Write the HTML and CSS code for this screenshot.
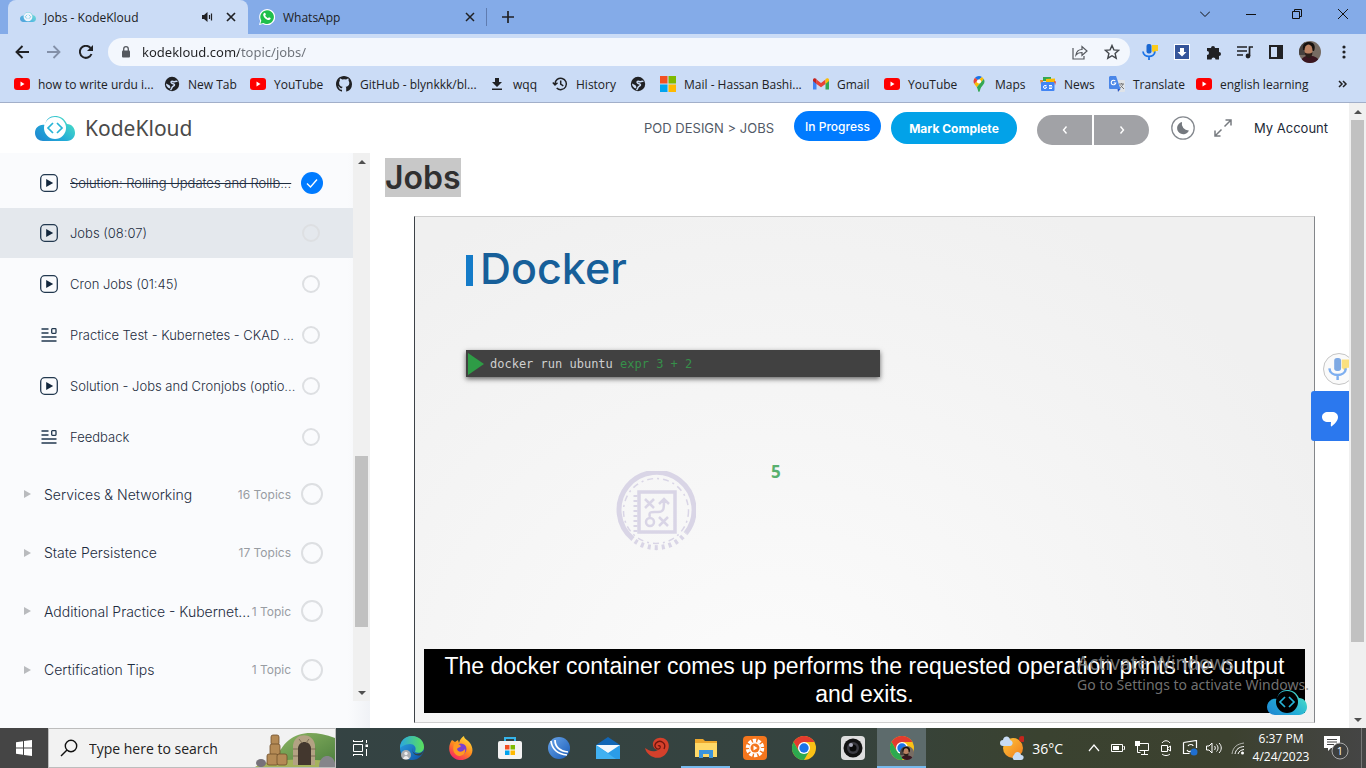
FILE: index.html
```html
<!DOCTYPE html>
<html lang="en">
<head>
<meta charset="utf-8">
<title>Jobs - KodeKloud</title>
<link rel="stylesheet" href="styles.css">
</head>
<body>
<svg class="defs" aria-hidden="true">
  <defs>
    <linearGradient id="g-cloud" x1="0" y1="1" x2="1" y2="0.3"><stop offset="0" stop-color="#1f83cf"/><stop offset=".5" stop-color="#22abd8"/><stop offset="1" stop-color="#48dcc6"/></linearGradient>
    <linearGradient id="g-edge" x1="0" y1="0" x2="1" y2="1"><stop offset="0" stop-color="#2fa8e8"/><stop offset="1" stop-color="#0c4fa3"/></linearGradient>
    <linearGradient id="g-edge2" x1="0" y1="0" x2="1" y2="0"><stop offset="0" stop-color="#2aa7e0"/><stop offset="1" stop-color="#5be05a"/></linearGradient>
    <linearGradient id="g-fox" x1=".8" y1="0" x2=".2" y2="1"><stop offset="0" stop-color="#ffe23e"/><stop offset=".5" stop-color="#ff8a1e"/><stop offset="1" stop-color="#f5186c"/></linearGradient>
    <linearGradient id="g-sun" x1="0" y1="0" x2="1" y2="1"><stop offset="0" stop-color="#ffc53a"/><stop offset="1" stop-color="#f07c1c"/></linearGradient>
    <linearGradient id="g-ball" x1="0" y1="0" x2="1" y2="1"><stop offset="0" stop-color="#6aa6ea"/><stop offset="1" stop-color="#1a5cb8"/></linearGradient>
    <linearGradient id="g-hill" x1="0" y1="0" x2="1" y2="1"><stop offset="0" stop-color="#8fb864"/><stop offset="1" stop-color="#4b7d3d"/></linearGradient>
  </defs>
  <symbol id="cloud" viewBox="0 0 40 25"><path d="M10 9C4 8 0 12 0 17c0 5 4 8 8 8h24c5 0 8-4 8-8 0-5-3-9-8-9C29 2 25 0 20 0S11 3 10 9z" fill="url(#g-cloud)"/><circle class="disc" cx="20" cy="12" r="11"/><path d="M18 7l-5 5 5 5M22 7l5 5-5 5" fill="none" stroke="#27b4d6" stroke-width="1.7"/></symbol>
  <symbol id="yt" viewBox="0 0 16 12"><rect width="16" height="12" rx="3" fill="#f00"/><path d="M6.500 3.500v5L10.500 6z" fill="#fff"/></symbol>
  <symbol id="globe" viewBox="0 0 16 16"><circle cx="8" cy="8" r="7.200" fill="#202124"/><path d="M13.500 5.500c-1.500-1-3 .8-4.500 0s-2.500.5-1.500 1.500 3 .3 3 1.800-2 1.200-2.500 2.700-1 2-1.500 2.500" fill="none" stroke="#cbdcf6" stroke-width="1.500"/><path d="M2 7.500l3.500 1.700 1 2-1 1.300C3.500 11.500 2 10 2 7.500z" fill="#cbdcf6"/></symbol>
  <symbol id="github" viewBox="0 0 16 16"><path fill="#202124" d="M8 0C3.580 0 0 3.580 0 8c0 3.540 2.290 6.530 5.470 7.590.4.070.55-.17.55-.38v-1.500C4 14 3.500 12.800 3.300 12.300c-.1-.3-.6-1.100-1-1.300-.3-.2-.8-.6 0-.6.7 0 1.200.6 1.300.9.800 1.300 2 1 2.500.7.100-.5.300-1 .6-1.200-1.800-.2-3.600-.9-3.600-4 0-.9.300-1.600.8-2.100-.1-.2-.4-1 .1-2.100 0 0 .7-.2 2.200.8a7.600 7.600 0 0 1 4 0c1.500-1 2.200-.8 2.200-.8.4 1.100.2 1.900.1 2.100.5.600.8 1.300.8 2.100 0 3.100-1.900 3.800-3.700 4 .3.200.6.700.6 1.500v2.900c0 .2.100.5.5.4A8 8 0 0 0 16 8c0-4.420-3.580-8-8-8z"/></symbol>
  <symbol id="download" viewBox="0 0 14 16"><path d="M5 2h4v4h3l-5 5-5-5h3zM2 12.500h10V14H2z" fill="#202124"/></symbol>
  <symbol id="history" viewBox="0 0 16 16"><path d="M3 8a5.700 5.700 0 1 1 1.700 4M.8 6.500L3 9l2.500-2.300M8.700 4.500V8.200l2.600 1.600" fill="none" stroke="#202124" stroke-width="1.500"/></symbol>
  <symbol id="ms" viewBox="0 0 16 16"><path d="M0 0h7.500v7.500H0z" fill="#f25022"/><path d="M8.500 0H16v7.500H8.500z" fill="#7fba00"/><path d="M0 8.500h7.500V16H0z" fill="#00a4ef"/><path d="M8.500 8.500H16V16H8.500z" fill="#ffb900"/></symbol>
  <symbol id="gmail" viewBox="0 0 16 12"><path d="M0 2v9.500h3.500V5z" fill="#4285f4"/><path d="M16 2v9.500h-3.500V5z" fill="#34a853"/><path d="M3.500 1.500L8 5l4.500-3.500V6L8 9.300 3.500 6z" fill="#ea4335"/><path d="M0 2c0-2 2-2.500 3.500-1v5L0 3z" fill="#c5221f"/><path d="M16 2c0-2-2-2.500-3.500-1v5L16 3z" fill="#fbbc04"/></symbol>
  <symbol id="maps" viewBox="0 0 12 16"><path d="M6 0a5.500 5.500 0 0 0-4 1.700l3 2.600L9 1C8 .3 7 0 6 0z" fill="#1a73e8"/><path d="M2 1.700A5.600 5.600 0 0 0 1.300 8L5 4.300z" fill="#ea4335"/><path d="M1.300 8C2 9 3 10 3.800 11.300L10.800 3 9 1z" fill="#fbbc04"/><path d="M3.800 11.300C5 13.300 5 16 6 16s1-2.700 2.200-4.700C9.500 9.300 11.500 8 11.500 5.500c0-1-.2-1.800-.7-2.500z" fill="#34a853"/><circle cx="6" cy="5.500" r="2.100" fill="#fff"/></symbol>
  <symbol id="news" viewBox="0 0 16 14"><path d="M3 0h8v4H3z" fill="#34a853"/><path d="M0 3h3v5H1z" fill="#ea8b35"/><path d="M6 2l9-.5V6H6z" fill="#fbbc04"/><path d="M14 4l2 .5-1 4z" fill="#ea4335"/><rect x="1" y="5" width="13.500" height="9" rx="1" fill="#4285f4"/><path d="M6.500 8.500H5A1.500 1.500 0 1 0 6.500 10H5.300M9 8.500h3M9 10h3.500M9 11.500h3" stroke="#fff" fill="none"/></symbol>
  <symbol id="translate" viewBox="0 0 16 16"><path d="M6 4h9a1 1 0 0 1 1 1v10a1 1 0 0 1-1 1H9z" fill="#dfe3e8"/><path d="M1 0h6l4.500 13H1a1 1 0 0 1-1-1V1z" fill="#4a86e8"/><path d="M8.500 13h3L9 16z" fill="#2a56c6"/><path d="M6.300 5A2.300 2.300 0 1 0 6.800 7H4.700" stroke="#fff" fill="none" stroke-width="1.100"/><path d="M10 8h5M12.500 7v1M14 8c-.5 2-2 3-3 4M11.500 9.500L15 13" stroke="#777" fill="none"/></symbol>
  <symbol id="wa" viewBox="0 0 16 16"><path d="M0 16l1.200-4A8 8 0 1 1 4 14.900z" fill="#fff"/><path d="M1.300 14.700l1-3A6.800 6.800 0 1 1 4.500 13.900z" fill="#1fbf4b"/><path d="M5.200 4c.6-.4 1-.2 1.200.3l.5 1.200-.7 1c.6 1.300 1.600 2.100 2.800 2.700l.9-1 1.700.8c.3.800-.5 2-1.700 2.100-2.800-.2-5.600-3-5.700-5.400 0-.8.5-1.400 1-1.700z" fill="#fff"/></symbol>
  <symbol id="mic" viewBox="0 0 16 16"><path d="M10 1h6v6h-2l-2 2-2-2z" fill="#fbcb1c"/><rect x="4.500" y="0" width="5" height="9.500" rx="2" fill="#1967d2"/><path d="M1 7.500c.5 6.500 11.500 6.500 12 0M7 12v4" fill="none" stroke="#1a73e8" stroke-width="1.800"/></symbol>
  <symbol id="chrome" viewBox="0 0 24 24"><circle cx="12" cy="12" r="12" fill="#fbc116"/><path d="M12 6h10.400A12 12 0 0 0 1.600 6l5.200 9z" fill="#e33b2e"/><path d="M1.600 6A12 12 0 0 0 12 24l5.200-9H6.800z" fill="#2da94f"/><circle cx="12" cy="12" r="6" fill="#fff"/><circle cx="12" cy="12" r="4.700" fill="#1a73e8"/></symbol>
  <symbol id="face" viewBox="0 0 22 22"><clipPath id="c-face"><circle cx="11" cy="11" r="11"/></clipPath><g clip-path="url(#c-face)"><path d="M0 0h22v22H0z" fill="#776c63"/><path d="M0 0h6v14H0z" fill="#46413e"/><path d="M1 22c2-7 6-7 9-7 4 0 9 0 11 7z" fill="#3a1620"/><path d="M4 9C3 2 7 1 10 1c5 0 7 4 5 9z" fill="#17120f"/><ellipse cx="9.500" cy="9.500" rx="4" ry="6" fill="#bb8262"/><path d="M5.500 11c2 2 6 2 8 0 0 8-7 8-8 0z" fill="#2c1e19"/></g></symbol>
  <symbol id="play" viewBox="0 0 18 18"><rect x=".7" y=".7" width="16.600" height="16.600" rx="4" fill="none" stroke="#22384f" stroke-width="1.300"/><path d="M6.200 5v8l7-4z" fill="#12263c"/></symbol>
  <symbol id="quiz" viewBox="0 0 16 14"><path d="M.5 1h7M.5 5h7M.5 9h15M.5 13h15" stroke="#22384f" stroke-width="1.500"/><rect x="10.700" y=".7" width="4.300" height="4.600" rx=".7" fill="none" stroke="#22384f" stroke-width="1.300"/></symbol>
</svg>

<div class="screen">
  <header class="browser">
    <div class="tabs">
      <div class="tab tab-active">
        <svg class="i16 light" viewBox="0 0 40 32"><use href="#cloud" y="3" width="40" height="26"/></svg>
        <span class="tab-title">Jobs - KodeKloud</span>
        <svg class="i12" viewBox="0 0 12 12"><path d="M0 4h2l3.500-3v10L2 8H0z" fill="#202124"/><path d="M7.500 4v4M9.500 2.500v7" stroke="#202124" stroke-width="1.200"/></svg>
        <button class="plain" aria-label="Close tab"><svg class="i10" viewBox="0 0 10 10"><path d="M1 1l8 8M9 1L1 9" stroke="#202124" stroke-width="1.700"/></svg></button>
      </div>
      <div class="tab">
        <svg class="i16"><use href="#wa"/></svg>
        <span class="tab-title">WhatsApp</span>
        <button class="plain" aria-label="Close tab"><svg class="i10" viewBox="0 0 10 10"><path d="M1 1l8 8M9 1L1 9" stroke="#202124" stroke-width="1.500"/></svg></button>
      </div>
      <button class="plain newtab" aria-label="New tab"><svg class="i12" viewBox="0 0 12 12"><path d="M6 0v12M0 6h12" stroke="#202124" stroke-width="1.700"/></svg></button>
      <div class="winbtns">
        <button class="plain" aria-label="Search tabs"><svg class="i10" viewBox="0 0 10 10"><path d="M0 2.500l5 5 5-5" fill="none" stroke="#111"/></svg></button>
        <button class="plain" aria-label="Minimize"><svg class="i10" viewBox="0 0 10 10"><path d="M0 5.500h10" stroke="#111"/></svg></button>
        <button class="plain" aria-label="Restore"><svg class="i10" viewBox="0 0 10 10"><path d="M.5 2.500h7v7h-7zM2.500 2.500v-2h7v7h-2" fill="none" stroke="#111"/></svg></button>
        <button class="plain" aria-label="Close"><svg class="i10" viewBox="0 0 10 10"><path d="M0 0l10 10M10 0L0 10" stroke="#111"/></svg></button>
      </div>
    </div>

    <div class="toolbar">
      <div class="navbtns">
        <button class="plain" aria-label="Back"><svg class="i14" viewBox="0 0 14 14"><path d="M14 7H1.500M7.500 1l-6 6 6 6" fill="none" stroke="#202124" stroke-width="1.900"/></svg></button>
        <button class="plain" aria-label="Forward"><svg class="i14" viewBox="0 0 14 14"><path d="M0 7h12.500M6.500 1l6 6-6 6" fill="none" stroke="#8390a8" stroke-width="1.800"/></svg></button>
        <button class="plain" aria-label="Reload"><svg class="i14" viewBox="0 0 14 14"><path d="M12.500 9A6 6 0 1 1 11.500 3" fill="none" stroke="#202124" stroke-width="2"/><path d="M14 0v6H8z" fill="#202124"/></svg></button>
      </div>
      <div class="omnibox">
        <svg class="i12" viewBox="0 0 12 12"><rect x="2" y="4.500" width="8" height="7" rx="1" fill="#54585e"/><path d="M3.700 5V3a2.300 2.300 0 0 1 4.600 0v2" fill="none" stroke="#54585e" stroke-width="1.300"/></svg>
        <input class="url" type="text" aria-label="Address" value="kodekloud.com/topic/jobs/">
        <button class="plain" aria-label="Share"><svg class="i16" viewBox="0 0 16 16"><path d="M1 4v11h11v-3M4 11c.5-4 3-5.500 6-5.500V2.500L15 7l-5 4.500v-3c-3 0-4.500.5-6 2.500z" fill="none" stroke="#54585e" stroke-width="1.200"/></svg></button>
        <button class="plain" aria-label="Bookmark"><svg class="i16" viewBox="0 0 16 16"><path d="M8 1.500l1.900 4.400 4.800.4-3.600 3.200 1.100 4.700L8 11.700l-4.200 2.500 1.100-4.700L1.300 6.300l4.800-.4z" fill="none" stroke="#43474c" stroke-width="1.400"/></svg></button>
      </div>
      <div class="exts">
        <button class="plain" aria-label="Voice"><svg class="i16"><use href="#mic"/></svg></button>
        <button class="plain" aria-label="Downloader"><svg class="i16" viewBox="0 0 16 16"><path d="M0 0h16v16H0z" fill="#fff"/><path d="M1 1h14v14H1z" fill="#35559a"/><path d="M6 4h4v4h2.500L8 12.500 3.500 8H6z" fill="#fff"/></svg></button>
        <button class="plain" aria-label="Extensions"><svg class="i16" viewBox="0 0 16 16"><path d="M1 4h4a2 2 0 1 1 4 0h4v4a2 2 0 1 1 0 4v3.500H9.500a2 2 0 1 0-4 0H1V11a2 2 0 1 0 0-4z" fill="#202124"/></svg></button>
        <button class="plain" aria-label="Media"><svg class="i16" viewBox="0 0 16 16"><path d="M0 3h10M0 7h10M0 11h6M12.500 12V3H16" fill="none" stroke="#202124" stroke-width="1.700"/><circle cx="11" cy="12" r="2.400" fill="#202124"/></svg></button>
        <button class="plain" aria-label="Side panel"><svg class="i14" viewBox="0 0 14 14"><path d="M1 1h12v12H1z" fill="none" stroke="#202124" stroke-width="2"/><path d="M8 1h5v12H8z" fill="#202124"/></svg></button>
        <button class="plain" aria-label="Profile"><svg class="i22"><use href="#face"/></svg></button>
        <button class="plain" aria-label="Menu"><svg class="i14" viewBox="0 0 14 14"><path d="M7 2v.01M7 7v.01M7 12v.01" stroke="#202124" stroke-width="3.200" stroke-linecap="round"/></svg></button>
      </div>
    </div>

    <nav class="bookmarks">
      <a href="#"><svg class="i16"><use href="#yt"/></svg>how to write urdu i...</a>
      <a href="#"><svg class="i16"><use href="#globe"/></svg>New Tab</a>
      <a href="#"><svg class="i16"><use href="#yt"/></svg>YouTube</a>
      <a href="#"><svg class="i16"><use href="#github"/></svg>GitHub - blynkkk/bl...</a>
      <a href="#"><svg class="i16"><use href="#download"/></svg>wqq</a>
      <a href="#"><svg class="i16"><use href="#history"/></svg>History</a>
      <a href="#" aria-label="Site"><svg class="i16"><use href="#globe"/></svg></a>
      <a href="#"><svg class="i16"><use href="#ms"/></svg>Mail - Hassan Bashi...</a>
      <a href="#"><svg class="i16"><use href="#gmail"/></svg>Gmail</a>
      <a href="#"><svg class="i16"><use href="#yt"/></svg>YouTube</a>
      <a href="#"><svg class="i16"><use href="#maps"/></svg>Maps</a>
      <a href="#"><svg class="i16"><use href="#news"/></svg>News</a>
      <a href="#"><svg class="i16"><use href="#translate"/></svg>Translate</a>
      <a href="#"><svg class="i16"><use href="#yt"/></svg>english learning</a>
      <button class="plain more" aria-label="More bookmarks"><svg class="i10" viewBox="0 0 10 10"><path d="M1 2l3 3-3 3M5 2l3 3-3 3" fill="none" stroke="#202124" stroke-width="1.500"/></svg></button>
    </nav>
  </header>

  <div class="page">
    <div class="site">
      <header class="site-head">
        <a class="brand" href="#"><svg class="brand-logo"><use href="#cloud"/></svg>KodeKloud</a>
        <span class="crumbs">POD DESIGN &gt; JOBS</span>
        <button class="pill status">In Progress</button>
        <button class="pill complete">Mark Complete</button>
        <div class="pager">
          <button aria-label="Previous"><svg class="i10" viewBox="0 0 10 10"><path d="M6.500 1.500L3.500 5l3 3.500" fill="none" stroke="#fff" stroke-width="1.400"/></svg></button>
          <button aria-label="Next"><svg class="i10" viewBox="0 0 10 10"><path d="M3.500 1.500L6.500 5l-3 3.500" fill="none" stroke="#fff" stroke-width="1.400"/></svg></button>
        </div>
        <button class="plain moon" aria-label="Dark mode"><svg class="i24" viewBox="0 0 24 24"><circle cx="12" cy="12" r="11.200" fill="none" stroke="#85898f" stroke-width="1.300"/><path d="M11 6a6.200 6.200 0 1 0 7 8.500A6.800 6.800 0 0 1 11 6z" fill="#74787e"/></svg></button>
        <button class="plain expand" aria-label="Expand"><svg class="i18" viewBox="0 0 18 18"><path d="M10.500 7.500L17 1M11.500 1H17v5.500M7.500 10.500L1 17M1 11.500V17h5.500" fill="none" stroke="#777b80" stroke-width="1.500"/></svg></button>
        <a class="account" href="#">My Account</a>
      </header>

      <div class="body">
        <aside class="side">
          <div class="side-scroll">
            <nav class="lessons">
              <a class="lesson done" href="#"><svg class="i18"><use href="#play"/></svg><span>Solution: Rolling Updates and Rollb...</span><i class="ring ring-on"><svg class="i12" viewBox="0 0 12 12"><path d="M1 6.500L4.500 10 11 2.500" fill="none" stroke="#fff" stroke-width="1.400"/></svg></i></a>
              <a class="lesson current" href="#"><svg class="i18"><use href="#play"/></svg><span>Jobs (08:07)</span><i class="ring"></i></a>
              <a class="lesson" href="#"><svg class="i18"><use href="#play"/></svg><span>Cron Jobs (01:45)</span><i class="ring"></i></a>
              <a class="lesson" href="#"><svg class="i18 q"><use href="#quiz"/></svg><span>Practice Test - Kubernetes - CKAD ...</span><i class="ring"></i></a>
              <a class="lesson" href="#"><svg class="i18"><use href="#play"/></svg><span>Solution - Jobs and Cronjobs (optio...</span><i class="ring"></i></a>
              <a class="lesson" href="#"><svg class="i18 q"><use href="#quiz"/></svg><span>Feedback</span><i class="ring"></i></a>
              <div class="topics">
                <a class="topic" href="#"><i class="caret"></i><span>Services &amp; Networking</span><small>16 Topics</small><i class="ring ring-big"></i></a>
                <a class="topic" href="#"><i class="caret"></i><span>State Persistence</span><small>17 Topics</small><i class="ring ring-big"></i></a>
                <a class="topic" href="#"><i class="caret"></i><span>Additional Practice - Kubernet...</span><small>1 Topic</small><i class="ring ring-big"></i></a>
                <a class="topic" href="#"><i class="caret"></i><span>Certification Tips</span><small>1 Topic</small><i class="ring ring-big"></i></a>
              </div>
            </nav>
            <div class="bar bar-side"><i class="up"></i><i class="thumb"></i><i class="down"></i></div>
          </div>
        </aside>

        <main class="main">
          <h1><mark>Jobs</mark></h1>
          <section class="video">
            <h2>Docker</h2>
            <div class="cmd"><i class="prompt"></i><code>docker run ubuntu <b>expr 3 + 2</b></code></div>
            <div class="result">
              <svg class="badge" viewBox="0 0 80 80" fill="none" stroke="#d9d5e6"><path d="M17 68A37.500 37.500 0 1 1 70 62" stroke-width="5"/><path d="M19 70A37.500 37.500 0 0 0 70 62" stroke-width="5" stroke-dasharray="3 4"/><circle cx="40" cy="40" r="32.500" stroke-width="1.500" stroke-dasharray="6 4 2 4"/><path d="M23 21h36v40H23z" stroke-width="3.500"/><path d="M19.500 24v37" stroke-width="4" stroke-dasharray="2 3"/><path d="M29 28l9 9M38 28l-9 9M43 46l9 9M52 46l-9 9" stroke-width="2.500"/><path d="M34 46c-2-6 2-5 8-5s6-3 6-12M43 33l5-5 5 5" stroke-width="2.500"/><circle cx="34" cy="51" r="4" stroke-width="2.500"/></svg>
              <output>5</output>
            </div>
            <p class="caption">The docker container comes up performs the requested operation prints the output<br>and exits.</p>
            <svg class="player-logo"><use href="#cloud"/></svg>
          </section>
          <button class="float mic" aria-label="Voice input"><svg class="i22" viewBox="0 0 24 24"><use href="#mic" width="24" height="24"/></svg></button>
          <button class="float chat" aria-label="Chat"><svg class="i16" viewBox="0 0 16 16"><path d="M6 1h4c3.500 0 6 2 6 5 0 4-3.500 7-6.500 9.500-.8 0-.8-1-.5-4.500H6c-3.500 0-6-2-6-5s2.500-5 6-5z" fill="#fff"/></svg></button>
        </main>
      </div>
    </div>
    <div class="bar bar-page"><i class="up"></i><i class="thumb"></i><i class="down"></i></div>
    <div class="activate"><p>Activate Windows</p><p>Go to Settings to activate Windows.</p></div>
  </div>

  <footer class="taskbar">
    <button class="start" aria-label="Start"><svg class="i16" viewBox="0 0 16 16"><path d="M0 2.300L7 1.300v6.200H0zM8 1.100L16 0v7.500H8zM0 8.500h7v6.200l-7-1zM8 8.500h8V16l-8-1.100z" fill="#fff"/></svg></button>
    <label class="search">
      <svg class="i18" viewBox="0 0 18 18"><circle cx="11" cy="7" r="5.700" fill="none" stroke="#111" stroke-width="1.400"/><path d="M7 11l-6 6" stroke="#111" stroke-width="1.400"/></svg>
      <input type="text" aria-label="Search" value="Type here to search">
      <svg class="scene" viewBox="0 0 80 38"><path d="M18 38C28 4 50-2 80 9v29z" fill="url(#g-hill)"/><path d="M0 38c10-8 60-10 80-4v4z" fill="#a5b35c"/><path d="M38 36V16c2-13 20-13 22 0v20z" fill="#b3a283"/><path d="M43 36V19c1-8 12-8 13 0v17z" fill="#43372e"/><path d="M38 20h5M38 27h5M56 20h5M56 27h5M44 10l3 4M54 10l-3 4" stroke="#7d6d55"/><g fill="#b48a55" stroke="#6e4e2a" stroke-width=".8"><rect x="16" y="6" width="8" height="10" rx="2"/><rect x="15" y="15" width="10" height="11" rx="2"/><rect x="12" y="25" width="11" height="11" rx="2"/><rect x="22" y="25" width="10" height="11" rx="2"/></g><path d="M64 38c0-14 14-14 16-4v4z" fill="#85858a"/><ellipse cx="6" cy="34" rx="5" ry="4" fill="#77727a"/></svg>
    </label>
    <div class="apps">
      <button aria-label="Task view"><svg class="i16" viewBox="0 0 16 16"><path d="M.5 4.500h9v7h-9zM0 1.500h10M0 14.500h10M.5 0v2M9.500 0v2M.5 14v2M9.500 14v2M13.500 0v3M13.500 9v7" fill="none" stroke="#fff"/><path d="M12.500 4.500h2.500V7h-2.500z" fill="#fff"/></svg></button>
      <button aria-label="Edge"><svg class="i24" viewBox="0 0 24 24"><circle cx="12" cy="12" r="12" fill="url(#g-edge)"/><path d="M0 12C0 5 5 0 12 0c7 0 12 5 12 11 0 5-5 7-9 5 2-5-1-8-5-8-5 0-9 3-10 4z" fill="url(#g-edge2)"/><path d="M13 12c-1 3 0 5 3 6 3 0 6-1 7-3 0 2-1 3-2 4-5 2-10-2-8-7z" fill="#364243"/><circle cx="6" cy="19" r="5" fill="#a9adb0"/><circle cx="6" cy="17.500" r="1.700" fill="#eee"/><path d="M3 23c1-4 5-4 6 0z" fill="#eee"/></svg></button>
      <button aria-label="Firefox"><svg class="i24" viewBox="0 0 24 24"><path d="M3 4l3 2 3-2 1 3C11 3 13 1 15 0c0 3 4 4 6 7 4 6 3 12-2 15-6 4-14 2-17-3C-1 14 0 8 3 4z" fill="url(#g-fox)"/><circle cx="12" cy="13" r="5.500" fill="#7a3fd0"/><path d="M5 8c3-1 5 0 7 2-1 2-3 1-4 3 1 4 6 3 8 0 1 5-3 7-6 7-5-1-7-6-5-12z" fill="#ff9a22"/></svg></button>
      <button aria-label="Store"><svg class="i24" viewBox="0 0 24 24"><path d="M7 7V2h10v5" fill="none" stroke="#35b5ea" stroke-width="2"/><rect y="5" width="24" height="18" rx="2" fill="#f3f3f3"/><path d="M7 9h4.500v4.500H7z" fill="#f25022"/><path d="M12.500 9H17v4.500h-4.500z" fill="#7fba00"/><path d="M7 14.500h4.500V19H7z" fill="#00a4ef"/><path d="M12.500 14.500H17V19h-4.500z" fill="#ffb900"/></svg></button>
      <button aria-label="Viewer"><svg class="i22" viewBox="0 0 22 22"><circle cx="11" cy="11" r="11" fill="url(#g-ball)"/><path d="M3 4c1 8 7 13 16 14M7 3c0 7 5 11 13 12" fill="none" stroke="#fff" stroke-width="1.700"/></svg></button>
      <button aria-label="Mail"><svg class="i24" viewBox="0 0 24 24"><path d="M0 9l12-8 12 8v3H0z" fill="#1266b5"/><path d="M0 9h24v14H0z" fill="#2b9ce8"/><path d="M0 9h24l-12 8z" fill="#f4f8fc"/><path d="M0 9v14h20z" fill="#41b1f2"/></svg></button>
      <button aria-label="Nautilus"><svg class="i24" viewBox="0 0 24 24"><path d="M0 12c2 10 18 15 23 2 3-8-3-13-9-12-8 1-8 11-1 12-5 3-10 0-13-2z" fill="#d5402b"/><path d="M19 13c3-6-4-10-8-6-3 4 2 8 4 5 1-2-1-3-2-2" fill="none" stroke="#70150e" stroke-width="1.300"/></svg></button>
      <button class="open" aria-label="File Explorer"><svg class="i22" viewBox="0 0 22 20"><path d="M0 1h8l2 2h12v16H0z" fill="#eda82d"/><path d="M0 5h22v14H0z" fill="#ffd968"/><path d="M4 20v-8h14v8h-4v-4H8v4z" fill="#3b94dc"/></svg></button>
      <button aria-label="Video tool"><svg class="i24" viewBox="0 0 24 24"><rect width="24" height="24" rx="4" fill="#f4761d"/><circle cx="12" cy="12" r="7.500" fill="none" stroke="#fff" stroke-width="3.500" stroke-dasharray="3.300 1.412"/><circle cx="12" cy="12" r="6" fill="#fff"/><circle cx="12" cy="12" r="4.500" fill="#f4761d"/><path d="M10.500 9.500l4 2.500-4 2.500z" fill="#fff"/></svg></button>
      <button aria-label="Chrome"><svg class="i24"><use href="#chrome"/></svg></button>
      <button aria-label="Camera"><svg class="i24" viewBox="0 0 24 24"><rect width="24" height="24" rx="4" fill="#dedede"/><circle cx="12" cy="12" r="9.500" fill="#111"/><circle cx="12" cy="12" r="6" fill="#3b3b42"/><circle cx="12" cy="12" r="3.500" fill="#090909"/><circle cx="10" cy="9" r="2" fill="#aab"/></svg></button>
      <button class="open active" aria-label="Chrome, Jobs"><svg class="i24" viewBox="0 0 24 24"><use href="#chrome" width="24" height="24"/><use href="#face" x="10" y="10" width="14" height="14"/></svg></button>
    </div>
    <div class="tray">
      <button class="weather"><svg class="i24" viewBox="0 0 24 24"><circle cx="13" cy="12" r="10" fill="url(#g-sun)"/><circle cx="22" cy="3" r="3" fill="#c4261d"/><path d="M3 10a3 3 0 0 1 0-6c1-5 7-4 7 0 4 1 3 6 0 6zM14 24a3 3 0 0 1 0-5c1-4 6-4 7 0 4 0 3 5 0 5z" fill="#c8dcf4"/></svg>36°C</button>
      <button aria-label="Hidden icons"><svg class="i12" viewBox="0 0 12 12"><path d="M1 9l5-6 5 6" fill="none" stroke="#fff" stroke-width="1.200"/></svg></button>
      <button aria-label="Battery"><svg class="i16" viewBox="0 0 16 16"><path d="M1.500 4.500h11v7h-11zM13.500 6.500h1v3h-1" fill="none" stroke="#fff"/><path d="M3 6h6v4H3z" fill="#fff"/></svg></button>
      <button aria-label="Network"><svg class="i16" viewBox="0 0 16 16"><path d="M5.500 3.500h9v7h-9M10.500 10.500v4M7 14.500h7M3.500 6v6.500h3" fill="none" stroke="#fff"/><path d="M1 1h5v5H1z" fill="#fff"/></svg></button>
      <button aria-label="Meet now"><svg class="i16" viewBox="0 0 16 16"><path d="M3.500 5.500h6v6h-6zM9.500 8l3-2v5l-3-2M4 3c2-3 6-3 8 0M4 14c2 2 6 2 8 0" fill="none" stroke="#fff"/></svg></button>
      <button aria-label="Sync"><svg class="i16" viewBox="0 0 16 16"><path d="M1.500 2.500l13-2V8M1.500 2.500v11h6M6 6c1-2 5-2 5 0M5 10c1 2 3 2 4 1" fill="none" stroke="#fff" stroke-width="1.200"/><circle cx="12" cy="12" r="3.500" fill="#1f6fd0"/></svg></button>
      <button aria-label="Volume"><svg class="i16" viewBox="0 0 16 16"><path d="M.5 6h2.500L6 3v10L3 10H.5zM8.500 6c1 1 1 3 0 4M10.500 4.500c2 2 2 5 0 7M13 3c3 3 3 7 0 10" fill="none" stroke="#fff"/></svg></button>
      <button aria-label="Wi-Fi"><svg class="i16" viewBox="0 0 16 16"><g fill="none" stroke="#fff"><path d="M2 14C3 7 7 4 14 3" opacity=".6"/><path d="M5 14c1-5 4-7 9-7.500M8 14c1-3 3-4 6-4.500"/></g><circle cx="12.500" cy="13" r="1.500" fill="#fff"/></svg></button>
      <button class="clock"><span>6:37 PM</span><span>4/24/2023</span></button>
      <button class="note" aria-label="Notifications"><svg viewBox="0 0 26 24" class="note-icon"><path d="M0 0h16v12H7l-3 3v-3H0z" fill="#fff"/><path d="M3 3.500h10M3 6h10M3 8.500h7" stroke="#444" /><circle cx="16" cy="15" r="8" fill="#3d3f3e" stroke="#aaa"/><text x="16" y="19" text-anchor="middle" class="note-num">1</text></svg></button>
    </div>
  </footer>
</div>
</body>
</html>
```
FILE: styles.css
```css
* { box-sizing: border-box; }
body { margin: 0; font-family: "Open Sans", "Noto Sans", sans-serif; font-size: 12px; color: #202124; }
button, input { font: inherit; color: inherit; border: 0; background: none; padding: 0; margin: 0; }
a { color: inherit; text-decoration: none; }
svg { flex: none; display: block; }
i { font-style: normal; flex: none; display: block; }
.defs { position: absolute; width: 0; height: 0; }
.i10 { width: 10px; height: 10px; }
.i12 { width: 12px; height: 12px; }
.i14 { width: 14px; height: 14px; }
.i16 { width: 16px; height: 16px; }
.i18 { width: 18px; height: 18px; }
.i22 { width: 22px; height: 22px; }
.i24 { width: 24px; height: 24px; }
.disc { fill: var(--disc, #fff); }
.plain { display: grid; place-items: center; }
.screen { height: 100vh; display: flex; flex-direction: column; overflow: hidden; }

/* browser chrome */
.browser { background: #cbdcf6; border-bottom: 1px solid #a2afc9; }
.tabs { display: flex; height: 34px; background: #84abe8; padding-left: 8px; align-items: stretch; }
.tab { display: flex; align-items: center; gap: 8px; width: 238px; padding: 0 11px; }
.tab-active { width: 240px; padding: 0 12px; background: #cbdcf6; border-radius: 8px 8px 0 0; }
.tab-title { flex: 1; white-space: nowrap; }
.tab-active .plain { margin-left: 4px; }
.light { opacity: .7; }
.newtab { width: 44px; position: relative; }
.newtab::before { content: ""; position: absolute; left: 0; top: 8px; bottom: 8px; width: 1px; background: #5f7cb0; }
.winbtns { margin-left: auto; display: flex; padding-bottom: 6px; }
.winbtns .plain { width: 46px; }
.toolbar { display: flex; height: 36px; align-items: center; padding: 0 15px; }
.navbtns { display: flex; gap: 18px; width: 93px; }
.omnibox { flex: 1; display: flex; align-items: center; gap: 10px; height: 28px; border-radius: 14px; background: #f3f7fd; padding: 0 10px 0 12px; }
.omnibox .plain { margin-left: 6px; }
.url { flex: 1; min-width: 0; font-family: "Noto Sans", sans-serif; font-size: 13px; color: transparent; background: linear-gradient(90deg, #202124 97px, #6b7078 97px); -webkit-background-clip: text; background-clip: text; }
.exts { display: flex; align-items: center; width: 221px; justify-content: space-between; padding-left: 12px; }
.bookmarks { display: grid; grid-template-columns: 150px 86px 86px 153px 63px 78px 30px 153px 71px 87px 69px 69px 87px 1fr auto; align-items: center; height: 32px; padding: 0 18px 4px 14px; }
.bookmarks a { display: flex; align-items: center; gap: 8px; white-space: nowrap; }

/* page */
.page { flex: 1; min-height: 0; display: flex; position: relative; font-family: Inter, sans-serif; background: #fff; }
.site { flex: 1; min-width: 0; display: flex; flex-direction: column; }
.site-head { display: flex; align-items: center; height: 50px; padding: 0 19px 0 35px; }
.brand { display: flex; align-items: center; gap: 10px; font-family: "Noto Sans", sans-serif; font-size: 21px; color: #4a4a4a; margin-right: auto; }
.brand-logo { width: 40px; height: 25px; }
.crumbs { font-size: 13px; color: #525a66; margin-right: 20px; }
.pill { color: #fff; height: 32px; border-radius: 16px; font-size: 12px; }
.status { width: 87px; height: 30px; background: #007bff; font-weight: 500; margin-right: 10px; margin-bottom: 4px; }
.complete { width: 126px; background: #02a2e8; font-weight: 700; margin-right: 20px; }
.pager { display: flex; gap: 2px; width: 112px; height: 30px; border-radius: 15px; overflow: hidden; margin-top: 4px; margin-right: 22px; }
.pager button { flex: 1; display: grid; place-items: center; background: #a1a2a6; }
.moon { margin-right: 19px; }
.expand { margin-right: 22px; }
.account { font-size: 13px; width: 76px; white-space: nowrap; color: #1b2836; }
.body { flex: 1; min-height: 0; display: flex; }
.side { flex: none; width: 370px; background: linear-gradient(90deg, #fafbfd 94%, #f0f2f6); padding-bottom: 27px; }
.side-scroll { display: flex; height: 100%; }
.lessons { flex: 1; min-width: 0; display: flex; flex-direction: column; gap: 1px; padding-top: 5px; }
.lesson { display: flex; align-items: center; height: 50px; padding: 0 33px 0 40px; gap: 12px; font-size: 13px; font-weight: 300; color: #1d2c40; white-space: nowrap; }
.lesson span, .topic span { flex: 1; min-width: 0; }
.lesson.done { margin-bottom: -1px; padding-right: 30px; }
.done span { text-decoration: line-through; }
.current { background: #e4e8ed; }
.q { padding: 1px; }
.ring { width: 18px; height: 18px; border: 2px solid #dddfe2; border-radius: 50%; }
.ring-on { width: 22px; height: 22px; background: #007bff; border: 0; display: grid; place-items: center; }
.ring-big { width: 22px; height: 22px; margin-left: 10px; }
.topics { flex: 1; display: flex; flex-direction: column; padding: 2px 0; }
.topic { flex: 1; display: flex; align-items: center; padding: 0 30px 0 24px; font-size: 14px; font-weight: 300; color: #1d2c40; white-space: nowrap; }
.topic small { font-size: 12px; font-weight: 400; color: #989ca2; }
.caret { border-left: 7px solid #b9bbbe; border-top: 4px solid transparent; border-bottom: 4px solid transparent; margin-right: 13px; }

/* scroll bars */
.bar { width: 17px; background: #f0f0f0; display: grid; justify-items: center; align-items: center; flex: none; }
.bar-side { grid-template-rows: 17px 286fr 171fr 57fr 17px; }
.bar-page { grid-template-rows: 17px 0fr 522fr 69fr 17px; }
.thumb { grid-row: 3; width: 13px; height: 100%; background: #c1c1c1; }
.up, .down { border: 4px solid transparent; }
.up { grid-row: 1; border-bottom-color: #505050; border-top: 0; }
.down { grid-row: 5; border-top-color: #505050; border-bottom: 0; }

/* lesson content */
.main { flex: 1; min-width: 0; position: relative; overflow: hidden; padding: 5px 34px 5px 15px; display: flex; flex-direction: column; }
h1 { margin: 0 0 19px; font-size: 32px; line-height: 39px; font-weight: 600; }
h1 mark { background: #c8c8c8; color: #303030; }
.video { position: relative; flex: 1; margin-left: 29px; display: flex; flex-direction: column; padding: 30px 9px 9px; border: 1px solid #cfcfcf; border-left-color: #3d4248; border-right-color: #83868a; background: radial-gradient(ellipse at 40% 100%, #fcfcfc 0, #f6f6f6 40%, #f0f0f0 80%); }
h2 { margin: 0 0 61px 42px; height: 42px; line-height: 42px; font-size: 43px; font-weight: 500; color: #175f99; display: flex; align-items: center; gap: 7px; }
h2::before { content: ""; width: 7px; height: 31px; background: #147bc8; margin-top: 4px; }
.cmd { display: flex; align-items: center; gap: 6px; width: 47%; height: 27px; margin-left: 42px; padding-left: 2px; background: #414141; box-shadow: 0 2px 5px rgba(0, 0, 0, .6); }
.prompt { border-left: 16px solid #2e9c46; border-top: 11px solid transparent; border-bottom: 11px solid transparent; }
code { font-family: "DejaVu Sans Mono", monospace; font-size: 12px; color: #cfcfcf; }
code b { font-weight: 400; color: #36904a; }
.result { display: flex; gap: 75px; margin: 94px 0 0 192px; }
.badge { width: 80px; height: 80px; }
output { font: 700 17px/20px "Open Sans", sans-serif; color: #58b06e; margin-top: -9px; }
.caption { margin: auto 0 0; height: 64px; background: #000; color: #fff; text-align: center; font: 23px/28px "Liberation Sans", sans-serif; padding-top: 3px; }
.player-logo { --disc: #000; position: absolute; right: 7px; bottom: 7px; width: 40px; height: 25px; }
.float { position: absolute; display: grid; place-items: center; }
.float.mic { right: -6px; top: 200px; width: 32px; height: 32px; border: 1px solid #c5c5c5; border-radius: 50%; background: #fafafa; }
.float.mic svg { opacity: .55; }
.float.chat { right: 0; top: 238px; width: 38px; height: 50px; background: #2b78ee; border-radius: 3px 0 0 3px; padding-top: 6px; }
.activate { position: absolute; right: 57px; bottom: 33px; font-family: "Noto Sans", sans-serif; color: rgba(135, 135, 135, .85); white-space: nowrap; }
.activate p { margin: 0; font-size: 14px; line-height: 20px; }
.activate p:first-child { font-size: 19px; line-height: 24px; }

/* task bar */
.taskbar { display: flex; height: 40px; color: #fff; background: linear-gradient(90deg, #344346 0, #35433f 60%, #3a4230 76%, #3c412f 90%, #454545 100%); }
.taskbar button { display: grid; place-items: center; }
.start { width: 48px; background: #454545; }
.search { display: flex; align-items: center; width: 288px; background: #f2f2f2; border: 1px solid #bdbdbd; padding-left: 11px; gap: 11px; color: #222; }
.search input { flex: 1; min-width: 0; font-size: 14px; }
.scene { width: 80px; height: 38px; }
.apps { display: flex; }
.apps button { width: 49px; }
.apps button:first-child { margin-right: 2px; }
.apps .open { border-bottom: 2px solid #76b9ed; padding-top: 2px; }
.apps .active { background: #5d6b6c; }
.tray { margin-left: auto; display: flex; }
.tray button { width: 24px; }
.tray .weather { display: flex; align-items: center; gap: 8px; width: auto; margin-right: 19px; font-size: 14px; }
.tray .clock { width: 62px; display: flex; flex-direction: column; justify-content: center; align-items: center; line-height: 18px; white-space: nowrap; }
.tray .note { width: 50px; margin-right: 4px; border-right: 1px solid #777; }
.note-icon { width: 26px; height: 24px; }
.note-num { font: 11px "Open Sans", sans-serif; fill: #fff; }
```
